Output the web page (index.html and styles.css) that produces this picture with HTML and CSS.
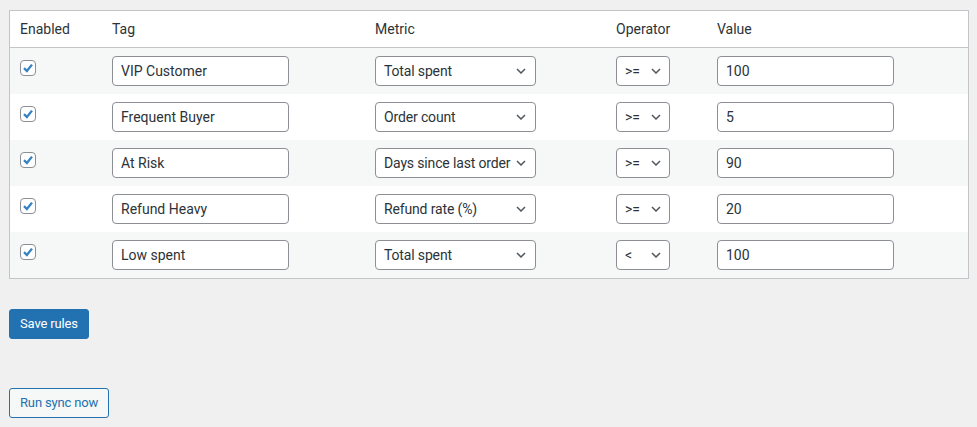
FILE: index.html
```html
<!DOCTYPE html>
<html lang="en">
<head>
<meta charset="utf-8">
<title>Tag rules</title>
<link rel="stylesheet" href="styles.css">
</head>
<body>
<form class="page">
  <table class="rules">
    <colgroup>
      <col class="c-enabled">
      <col class="c-tag">
      <col class="c-metric">
      <col class="c-op">
      <col class="c-value">
    </colgroup>
    <thead>
      <tr>
        <th>Enabled</th>
        <th>Tag</th>
        <th>Metric</th>
        <th>Operator</th>
        <th>Value</th>
      </tr>
    </thead>
    <tbody>
      <tr>
        <td><span class="check"><svg viewBox="0 0 14 14" width="14" height="14"><path d="M3 7.2 L5.9 10 L11 3.6" /></svg></span></td>
        <td><input class="field" type="text" value="VIP Customer"></td>
        <td><span class="sel metric"><select><option>Total spent</option></select><svg class="chev" viewBox="0 0 10 6" width="10" height="6"><path d="M1 1 L5 5 L9 1"/></svg></span></td>
        <td><span class="sel op"><select><option>&gt;=</option></select><svg class="chev" viewBox="0 0 10 6" width="10" height="6"><path d="M1 1 L5 5 L9 1"/></svg></span></td>
        <td><input class="field" type="text" value="100"></td>
      </tr>
      <tr>
        <td><span class="check"><svg viewBox="0 0 14 14" width="14" height="14"><path d="M3 7.2 L5.9 10 L11 3.6" /></svg></span></td>
        <td><input class="field" type="text" value="Frequent Buyer"></td>
        <td><span class="sel metric"><select><option>Order count</option></select><svg class="chev" viewBox="0 0 10 6" width="10" height="6"><path d="M1 1 L5 5 L9 1"/></svg></span></td>
        <td><span class="sel op"><select><option>&gt;=</option></select><svg class="chev" viewBox="0 0 10 6" width="10" height="6"><path d="M1 1 L5 5 L9 1"/></svg></span></td>
        <td><input class="field" type="text" value="5"></td>
      </tr>
      <tr>
        <td><span class="check"><svg viewBox="0 0 14 14" width="14" height="14"><path d="M3 7.2 L5.9 10 L11 3.6" /></svg></span></td>
        <td><input class="field" type="text" value="At Risk"></td>
        <td><span class="sel metric"><select><option>Days since last order</option></select><svg class="chev" viewBox="0 0 10 6" width="10" height="6"><path d="M1 1 L5 5 L9 1"/></svg></span></td>
        <td><span class="sel op"><select><option>&gt;=</option></select><svg class="chev" viewBox="0 0 10 6" width="10" height="6"><path d="M1 1 L5 5 L9 1"/></svg></span></td>
        <td><input class="field" type="text" value="90"></td>
      </tr>
      <tr>
        <td><span class="check"><svg viewBox="0 0 14 14" width="14" height="14"><path d="M3 7.2 L5.9 10 L11 3.6" /></svg></span></td>
        <td><input class="field" type="text" value="Refund Heavy"></td>
        <td><span class="sel metric"><select><option>Refund rate (%)</option></select><svg class="chev" viewBox="0 0 10 6" width="10" height="6"><path d="M1 1 L5 5 L9 1"/></svg></span></td>
        <td><span class="sel op"><select><option>&gt;=</option></select><svg class="chev" viewBox="0 0 10 6" width="10" height="6"><path d="M1 1 L5 5 L9 1"/></svg></span></td>
        <td><input class="field" type="text" value="20"></td>
      </tr>
      <tr>
        <td><span class="check"><svg viewBox="0 0 14 14" width="14" height="14"><path d="M3 7.2 L5.9 10 L11 3.6" /></svg></span></td>
        <td><input class="field" type="text" value="Low spent"></td>
        <td><span class="sel metric"><select><option>Total spent</option></select><svg class="chev" viewBox="0 0 10 6" width="10" height="6"><path d="M1 1 L5 5 L9 1"/></svg></span></td>
        <td><span class="sel op"><select><option>&lt;</option></select><svg class="chev" viewBox="0 0 10 6" width="10" height="6"><path d="M1 1 L5 5 L9 1"/></svg></span></td>
        <td><input class="field" type="text" value="100"></td>
      </tr>
    </tbody>
  </table>
  <div class="actions">
    <button type="button" class="btn primary">Save rules</button>
  </div>
  <div class="actions sync">
    <button type="button" class="btn secondary">Run sync now</button>
  </div>
</form>
</body>
</html>
```

FILE: styles.css
```css
html, body {
  margin: 0;
  background: #f0f0f1;
}
body {
  padding: 10px 8px 0 9px;
  font-family: Roboto, "Noto Sans", "Liberation Sans", sans-serif;
  font-size: 14px;
  color: #2c3338;
}
.rules {
  width: 960px;
  table-layout: fixed;
  border-collapse: separate;
  border-spacing: 0;
  border: 1px solid #c3c4c7;
  background: #fff;
}
.c-enabled { width: 92px; }
.c-tag { width: 263px; }
.c-metric { width: 241px; }
.c-op { width: 101px; }
.c-value { width: 261px; }

.rules th {
  text-align: left;
  font-weight: 400;
  padding: 8px 10px;
  line-height: 20px;
  color: #2c3338;
  border-bottom: 1px solid #c3c4c7;
}
.rules td {
  padding: 8px 10px;
  vertical-align: top;
  line-height: 30px;
  height: 30px;
}
.rules tbody tr:nth-child(odd) td {
  background: #f6f7f7;
}
.check {
  display: flex;
  align-items: center;
  justify-content: center;
  width: 16px;
  height: 16px;
  box-sizing: border-box;
  margin-top: 4px;
  border: 1px solid #8c8f94;
  border-radius: 4px;
  background: #fff;
}
.check svg {
  display: block;
}
.check path {
  fill: none;
  stroke: #3582c4;
  stroke-width: 2.3;
  stroke-linecap: butt;
  stroke-linejoin: miter;
}
.field,
.sel select {
  display: block;
  box-sizing: border-box;
  height: 30px;
  margin: 0;
  border: 1px solid #8c8f94;
  border-radius: 4px;
  background: #fff;
  color: #2c3338;
  font-family: inherit;
  font-size: 14px;
  line-height: 28px;
  padding: 0 8px;
}
.field {
  width: 177px;
}
.sel {
  position: relative;
  display: block;
}
.sel select {
  appearance: none;
  -webkit-appearance: none;
  padding-right: 14px;
}
.metric select {
  width: 161px;
  letter-spacing: -0.15px;
}
.op select { width: 54px; }
.sel .chev {
  position: absolute;
  top: 12px;
  pointer-events: none;
}
.metric .chev { left: 141px; }
.op .chev { left: 35px; }
.chev path {
  fill: none;
  stroke: #50575e;
  stroke-width: 1.5;
}
.actions {
  margin-top: 30px;
}
.actions.sync {
  margin-top: 49px;
}
.btn {
  display: inline-block;
  box-sizing: border-box;
  height: 30px;
  padding: 0 10px;
  margin: 0;
  border-radius: 3px;
  font-family: inherit;
  font-size: 13px;
  letter-spacing: -0.15px;
  line-height: 28px;
  cursor: pointer;
}
.btn.primary {
  background: #2271b1;
  border: 1px solid #2271b1;
  color: #fff;
}
.btn.secondary {
  background: #f6f7f7;
  border: 1px solid #2271b1;
  color: #2271b1;
}
```
